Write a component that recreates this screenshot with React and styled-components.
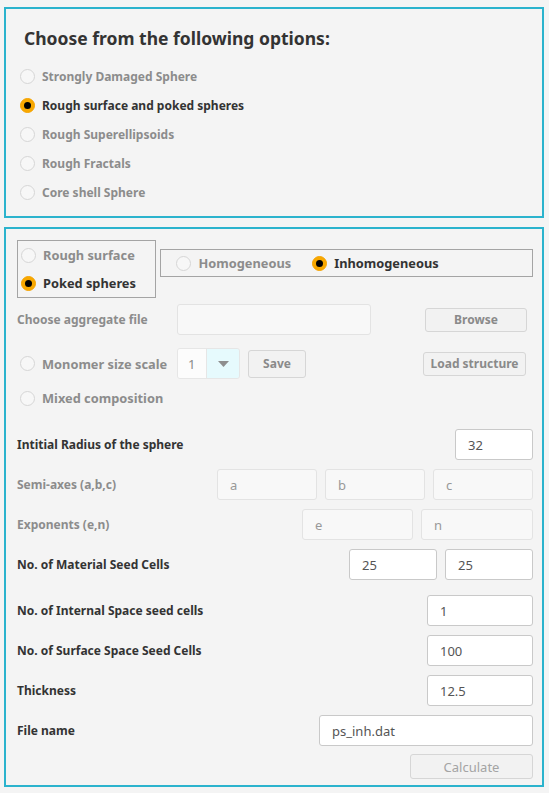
import React from "react";
import styled, { createGlobalStyle } from "styled-components";

const Global = createGlobalStyle`
  html, body { margin: 0; padding: 0; background: #f4f4f4; }
  body { font-family: "Noto Sans", "Open Sans", sans-serif; }
  * { box-sizing: border-box; }
`;

const Page = styled.div`
  width: 549px;
  padding: 7px 5px 0 4px;
  display: flex;
  flex-direction: column;
  gap: 9px;
`;

const Panel = styled.section`
  border: 2px solid #2bb3cd;
  background: #f4f4f4;
  display: flex;
  flex-direction: column;
  padding: ${(p) => p.$pad};
`;

const Heading = styled.h1`
  margin: 0 0 12px 4px;
  font-size: 17.5px;
  line-height: 24px;
  font-weight: 700;
  color: #333;
`;

const RadioList = styled.div`
  display: flex;
  flex-direction: column;
`;

const RadioRow = styled.label`
  display: flex;
  align-items: center;
  gap: 7px;
  height: ${(p) => p.$h || 29}px;
  width: ${(p) => (p.$w ? p.$w + "px" : "auto")};
  margin-left: ${(p) => p.$ml || 0}px;
  font-size: ${(p) => p.$size || 12}px;
  font-weight: 700;
  color: ${(p) => (p.$active ? "#333" : "#8c8c8c")};
  white-space: nowrap;
  flex: none;
`;

const Circle = styled.span`
  width: 15px;
  height: 15px;
  border-radius: 50%;
  flex: none;
  display: flex;
  align-items: center;
  justify-content: center;
  border: 1px solid ${(p) => (p.$on ? "#f5a300" : "#d6d6d6")};
  background: ${(p) => (p.$on ? "#f8a800" : "#f7f7f7")};
  &::after {
    content: "";
    display: ${(p) => (p.$on ? "block" : "none")};
    width: 7px;
    height: 7px;
    border-radius: 50%;
    background: #000;
  }
`;

const Radio = ({ on, children, ...rest }) => (
  <RadioRow $active={on} {...rest}>
    <Circle $on={on} />
    {children}
  </RadioRow>
);

const TopRow = styled.div`
  display: flex;
  align-items: flex-start;
  gap: 4px;
  margin-top: 11px;
`;

const GroupBox = styled.div`
  border: 1px solid #a4a4a4;
  display: flex;
  flex-direction: ${(p) => (p.$row ? "row" : "column")};
  align-items: ${(p) => (p.$row ? "center" : "stretch")};
  padding: ${(p) => p.$pad};
  width: ${(p) => p.$w}px;
  height: ${(p) => p.$h}px;
  margin-top: ${(p) => p.$mt || 0}px;
`;

const Line = styled.div`
  display: flex;
  align-items: center;
  height: ${(p) => p.$h}px;
  margin-top: ${(p) => p.$mt || 0}px;
  justify-content: ${(p) => p.$justify || "flex-start"};
`;

const Label = styled.span`
  font-size: 12px;
  font-weight: 700;
  color: ${(p) => (p.$dim ? "#8c8c8c" : "#333")};
  white-space: nowrap;
  width: ${(p) => (p.$w ? p.$w + "px" : "auto")};
  flex: none;
`;

const Inputs = styled.div`
  margin-left: auto;
  display: flex;
  gap: 8px;
`;

const Field = styled.div`
  width: ${(p) => p.$w}px;
  height: 31px;
  border-radius: 3px;
  border: 1px solid ${(p) => (p.$off ? "#e3e3e3" : "#c9c9c9")};
  background: ${(p) => (p.$off ? "#f8f8f8" : "#fff")};
  color: ${(p) => (p.$off ? "#999" : "#555")};
  font-size: 13px;
  display: flex;
  align-items: center;
  padding-left: 12px;
  flex: none;
`;

const Button = styled.div`
  width: ${(p) => p.$w}px;
  height: ${(p) => p.$h}px;
  border: 1px solid #d6d6d6;
  border-radius: 3px;
  background: #f2f2f2;
  color: ${(p) => (p.$plain ? "#a4a4a4" : "#8a8a8a")};
  font-size: ${(p) => (p.$plain ? 13 : 12)}px;
  font-weight: ${(p) => (p.$plain ? 400 : 700)};
  display: flex;
  align-items: center;
  justify-content: center;
  white-space: nowrap;
  flex: none;
  margin-left: ${(p) => (p.$ml === "auto" ? "auto" : (p.$ml || 0) + "px")};
  margin-right: ${(p) => p.$mr || 0}px;
`;

const Combo = styled.div`
  width: 63px;
  height: 31px;
  border: 1px solid #e6e6e6;
  border-radius: 3px;
  display: flex;
  overflow: hidden;
  flex: none;
`;

const ComboValue = styled.div`
  width: 29px;
  background: #fcfcfc;
  border-right: 1px solid #e6e6e6;
  color: #8a8a8a;
  font-size: 13px;
  display: flex;
  align-items: center;
  padding-left: 10px;
`;

const ComboArrow = styled.div`
  flex: 1;
  background: #e6fafd;
  display: flex;
  align-items: center;
  justify-content: center;
`;

const Spacer = styled.span`
  width: ${(p) => p.$w}px;
  flex: none;
`;

export default function App() {
  return (
    <>
      <Global />
      <Page>
        <Panel $pad="17px 6px 9px 14px">
          <Heading>Choose from the following options:</Heading>
          <RadioList>
            <Radio on={false}>Strongly Damaged Sphere</Radio>
            <Radio on>Rough surface and poked spheres</Radio>
            <Radio on={false}>Rough Superellipsoids</Radio>
            <Radio on={false}>Rough Fractals</Radio>
            <Radio on={false}>Core shell Sphere</Radio>
          </RadioList>
        </Panel>

        <Panel $pad="0 9px 6px 11px">
          <TopRow>
            <GroupBox $w={140} $h={58} $pad="0 0 0 3px">
              <Radio on={false} $h={28} $size={12.8}>Rough surface</Radio>
              <Radio on $h={28} $size={12.8}>Poked spheres</Radio>
            </GroupBox>
            <GroupBox $row $w={374} $h={28} $mt={9} $pad="0 0 0 15px">
              <Radio on={false} $size={12.8}>Homogeneous</Radio>
              <Spacer $w={21} />
              <Radio on $size={12.8}>Inhomogeneous</Radio>
            </GroupBox>
          </TopRow>

          <Line $h={31} $mt={6}>
            <Label $dim $w={160}>Choose aggregate file</Label>
            <Field $off $w={194} />
            <Button $w={102} $h={24} $ml="auto" $mr={6}>Browse</Button>
          </Line>

          <Line $h={31} $mt={13}>
            <Radio on={false} $size={12.8} $ml={3} $w={157}>Monomer size scale</Radio>
            <Combo>
              <ComboValue>1</ComboValue>
              <ComboArrow>
                <svg width="11" height="6" viewBox="0 0 11 6">
                  <path d="M0 0 H11 L5.5 6 Z" fill="#8e8e8e" />
                </svg>
              </ComboArrow>
            </Combo>
            <Button $w={58} $h={28} $ml={8}>Save</Button>
            <Button $w={103} $h={24} $ml="auto" $mr={7}>Load structure</Button>
          </Line>

          <Line $h={28} $mt={5}>
            <Radio on={false} $size={12.8} $ml={3}>Mixed composition</Radio>
          </Line>

          <Line $h={31} $mt={17}>
            <Label>Intitial Radius of the sphere</Label>
            <Inputs><Field $w={78}>32</Field></Inputs>
          </Line>
          <Line $h={31} $mt={9}>
            <Label $dim>Semi-axes (a,b,c)</Label>
            <Inputs>
              <Field $off $w={100}>a</Field>
              <Field $off $w={100}>b</Field>
              <Field $off $w={100}>c</Field>
            </Inputs>
          </Line>
          <Line $h={31} $mt={9}>
            <Label $dim>Exponents (e,n)</Label>
            <Inputs>
              <Field $off $w={111}>e</Field>
              <Field $off $w={112}>n</Field>
            </Inputs>
          </Line>
          <Line $h={31} $mt={9}>
            <Label>No. of Material Seed Cells</Label>
            <Inputs>
              <Field $w={88}>25</Field>
              <Field $w={88}>25</Field>
            </Inputs>
          </Line>
          <Line $h={31} $mt={15}>
            <Label>No. of Internal Space seed cells</Label>
            <Inputs><Field $w={106}>1</Field></Inputs>
          </Line>
          <Line $h={31} $mt={9}>
            <Label>No. of Surface Space Seed Cells</Label>
            <Inputs><Field $w={106}>100</Field></Inputs>
          </Line>
          <Line $h={31} $mt={9}>
            <Label>Thickness</Label>
            <Inputs><Field $w={106}>12.5</Field></Inputs>
          </Line>
          <Line $h={31} $mt={9}>
            <Label>File name</Label>
            <Inputs><Field $w={214}>ps_inh.dat</Field></Inputs>
          </Line>
          <Line $h={25} $mt={8} $justify="flex-end">
            <Button $plain $w={123} $h={25}>Calculate</Button>
          </Line>
        </Panel>
      </Page>
    </>
  );
}
